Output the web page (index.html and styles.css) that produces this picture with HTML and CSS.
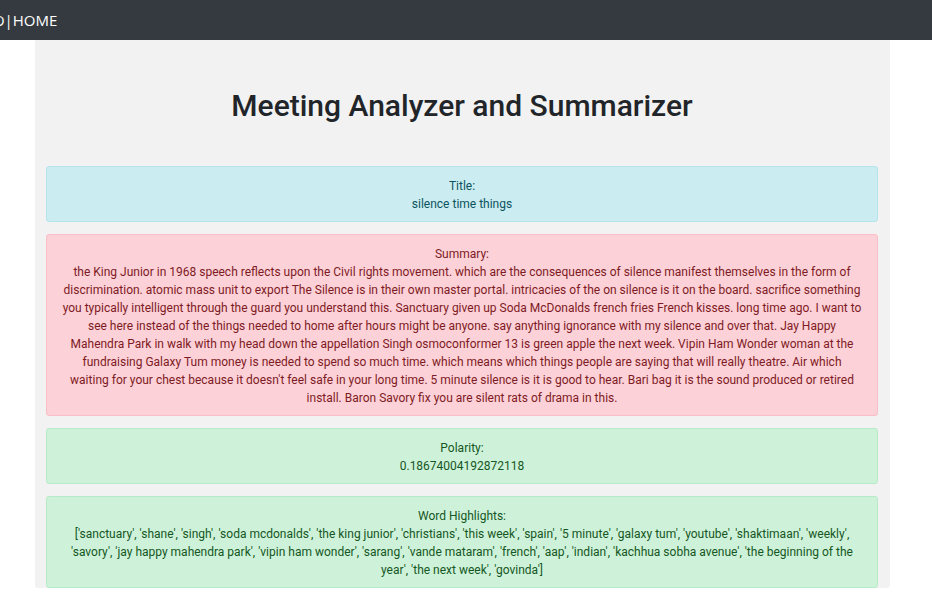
FILE: index.html
```html
<!DOCTYPE html>
<html lang="en">
<head>
<meta charset="utf-8">
<title>Meeting Analyzer and Summarizer</title>
<link rel="stylesheet" href="styles.css">
</head>
<body>
<nav class="navbar">
  <span class="brand">O | HOME</span>
</nav>
<main class="panel">
  <h1 class="heading">Meeting Analyzer and Summarizer</h1>
  <div class="alert alert-info">Title:<br>silence time things</div>
  <div class="alert alert-danger">Summary:<br>the King Junior in 1968 speech reflects upon the Civil rights movement. which are the consequences of silence manifest themselves in the form of discrimination. atomic mass unit to export The Silence is in their own master portal. intricacies of the on silence is it on the board. sacrifice something you typically intelligent through the guard you understand this. Sanctuary given up Soda McDonalds french fries French kisses. long time ago. I want to see here instead of the things needed to home after hours might be anyone. say anything ignorance with my silence and over that. Jay Happy Mahendra Park in walk with my head down the appellation Singh osmoconformer 13 is green apple the next week. Vipin Ham Wonder woman at the fundraising Galaxy Tum money is needed to spend so much time. which means which things people are saying that will really theatre. Air which waiting for your chest because it doesn't feel safe in your long time. 5 minute silence is it is good to hear. Bari bag it is the sound produced or retired install. Baron Savory fix you are silent rats of drama in this.</div>
  <div class="alert alert-success">Polarity:<br>0.18674004192872118</div>
  <div class="alert alert-success alert-last">Word Highlights:<br>['sanctuary', 'shane', 'singh', 'soda mcdonalds', 'the king junior', 'christians', 'this week', 'spain', '5 minute', 'galaxy tum', 'youtube', 'shaktimaan', 'weekly', 'savory', 'jay happy mahendra park', 'vipin ham wonder', 'sarang', 'vande mataram', 'french', 'aap', 'indian', 'kachhua sobha avenue', 'the beginning of the year', 'the next week', 'govinda']</div>
</main>
</body>
</html>
```

FILE: styles.css
```css
html, body {
  margin: 0;
  padding: 0;
  background: #ffffff;
  font-family: Roboto, "Liberation Sans", sans-serif;
  font-size: 12px;
  line-height: 1.5;
  color: #212529;
}

.navbar {
  height: 40px;
  background: #343a40;
  display: flex;
  align-items: center;
  overflow: hidden;
}

.brand {
  margin-left: -7px;
  color: #ffffff;
  font-family: "Open Sans", sans-serif;
  font-size: 15px;
  word-spacing: -4px;
}

.panel {
  width: 855px;
  margin-left: 35px;
  box-sizing: border-box;
  background: #f2f2f2;
  padding: 48px 12px 0 11px;
  border-radius: 0 0 3px 3px;
}

.heading {
  margin: 0 0 42px;
  font-size: 30px;
  line-height: 36px;
  font-weight: 500;
  text-align: center;
  color: #212529;
}

.alert {
  border: 1px solid transparent;
  border-radius: 3px;
  padding: 10px 15px 8px;
  margin-bottom: 12px;
  text-align: center;
}

.alert-last {
  margin-bottom: 0;
}

.alert-info {
  background: #cbecf1;
  border-color: #b5e4ec;
  color: #0c5460;
}

.alert-danger {
  background: #fdd1d8;
  border-color: #f9bec8;
  color: #7d1b24;
}

.alert-success {
  background: #cef2d9;
  border-color: #b7eac6;
  color: #155724;
}
```
